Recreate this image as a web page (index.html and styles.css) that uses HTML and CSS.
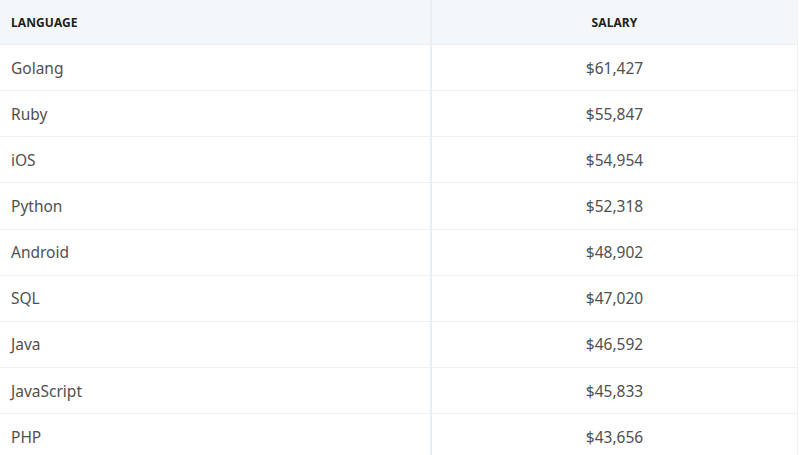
FILE: index.html
```html
<!DOCTYPE html>
<html>
<head>
<meta charset="utf-8">
<link rel="stylesheet" href="styles.css">
</head>
<body>
<table class="salary-table">
  <thead>
    <tr><th class="col-lang">LANGUAGE</th><th class="col-salary">SALARY</th></tr>
  </thead>
  <tbody>
    <tr><td class="col-lang">Golang</td><td class="col-salary">$61,427</td></tr>
    <tr><td class="col-lang">Ruby</td><td class="col-salary">$55,847</td></tr>
    <tr><td class="col-lang">iOS</td><td class="col-salary">$54,954</td></tr>
    <tr><td class="col-lang">Python</td><td class="col-salary">$52,318</td></tr>
    <tr><td class="col-lang">Android</td><td class="col-salary">$48,902</td></tr>
    <tr><td class="col-lang">SQL</td><td class="col-salary">$47,020</td></tr>
    <tr><td class="col-lang">Java</td><td class="col-salary">$46,592</td></tr>
    <tr><td class="col-lang">JavaScript</td><td class="col-salary">$45,833</td></tr>
    <tr><td class="col-lang">PHP</td><td class="col-salary">$43,656</td></tr>
  </tbody>
</table>
</body>
</html>
```
FILE: styles.css
```css
html, body {
  margin: 0;
  padding: 0;
  background: #ffffff;
  font-family: "Noto Sans", "Open Sans", sans-serif;
}
.salary-table {
  width: 798px;
  border-collapse: collapse;
  table-layout: fixed;
  border-right: 1px solid #eef1f4;
}
.salary-table th {
  height: 44px;
  padding: 0 11px;
  background: #f3f7fa;
  color: #1e1e1e;
  font-size: 12px;
  font-weight: 700;
  letter-spacing: 0.1px;
  border-bottom: 1px solid #e9eef2;
}
.salary-table td {
  height: 45.15px;
  padding: 0 11px;
  color: #505050;
  font-size: 15.5px;
  border-bottom: 1px solid #eef0f2;
}
.salary-table .col-lang {
  width: 408px;
  text-align: left;
  border-right: 2px solid #e9eef2;
}
.salary-table .col-salary {
  text-align: center;
}
```
